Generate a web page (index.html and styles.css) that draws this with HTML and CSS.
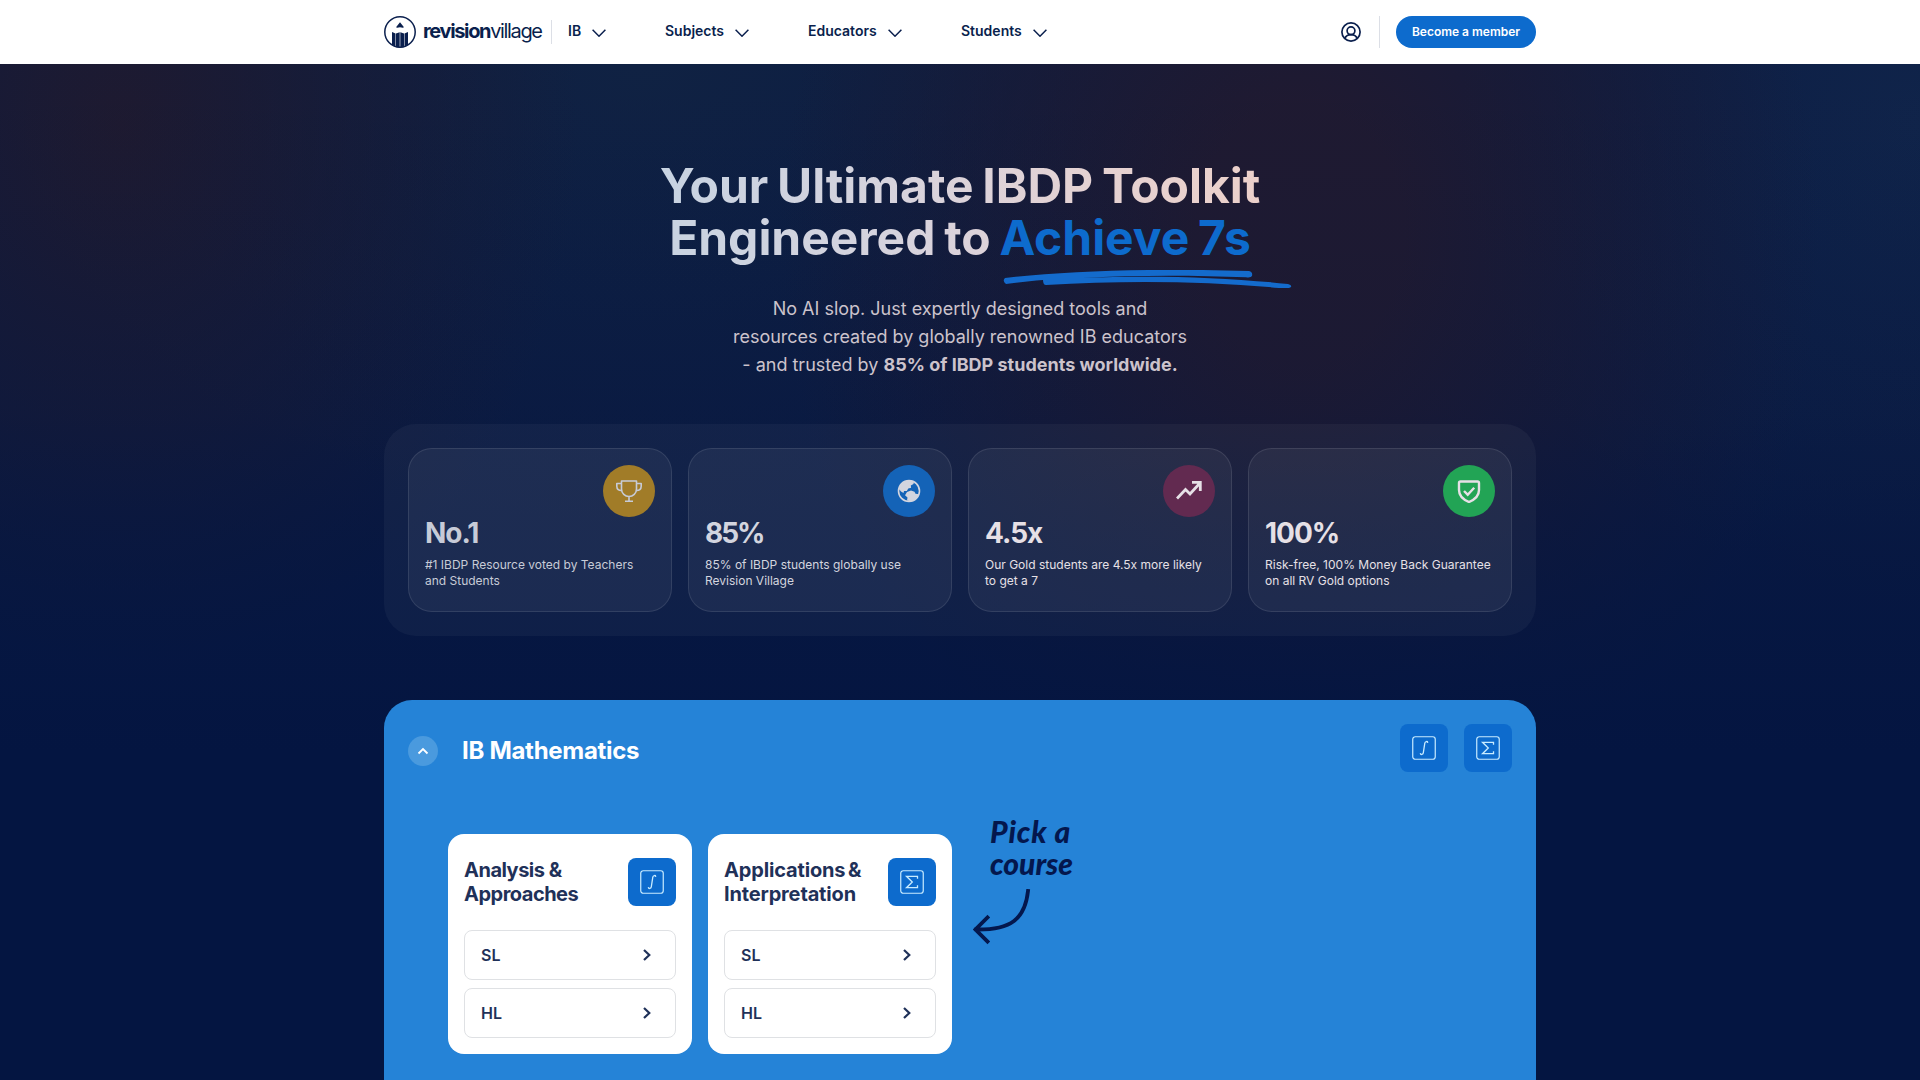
FILE: index.html
```
<!DOCTYPE html>
<html lang="en">
<head>
  <meta charset="UTF-8">
  <meta name="viewport" content="width=device-width, initial-scale=1.0">
  <title>Revision Village</title>
  <link rel="stylesheet" href="styles.css">
</head>
<body>

<!-- Shared icons -->
<svg class="sprite" width="0" height="0">
  <symbol id="chevron-down" viewBox="0 0 14 8"><path d="M0.6 0.8 7 7.2 13.4 0.8" fill="none" stroke="currentColor" stroke-width="1.5"/></symbol>
  <symbol id="chevron-right" viewBox="0 0 8 12"><path d="M1 1 6.3 6 1 11" fill="none" stroke="currentColor" stroke-width="2.2"/></symbol>
  <symbol id="integral" viewBox="0 0 24 24">
    <rect x="0.75" y="0.75" width="22.5" height="22.5" rx="2.5" fill="none" stroke="currentColor" stroke-width="1.2"/>
    <path d="M8.4 17.6c.2 1.2 2.5 1.4 2.9-.8L12.8 7.2c.4-2.2 2.7-2 2.9-.8" fill="none" stroke="currentColor" stroke-width="1.3" stroke-linecap="round"/>
  </symbol>
  <symbol id="sigma" viewBox="0 0 24 24">
    <rect x="0.75" y="0.75" width="22.5" height="22.5" rx="2.5" fill="none" stroke="currentColor" stroke-width="1.2"/>
    <path d="M17.5 8.8V6.3H6.5L12.3 12 6.5 17.7h11v-2.5" fill="none" stroke="currentColor" stroke-width="1.3"/>
  </symbol>
</svg>

<header class="header">
  <div class="container header-inner">
    <a class="logo" href="#">
      <svg width="32" height="32" viewBox="0 0 32 32">
        <circle cx="16" cy="16" r="15.2" fill="none" stroke="#0a1f4d" stroke-width="1.5"/>
        <path d="M16 6.2 20 11.2c-1.3 1-2.7 0-4 0s-2.7 1-4 0z" fill="#0a1f4d"/>
        <path d="M8 16 11.5 17.4V30.6L8 29.1zM12 17.6 15.7 16.2V31.6L12 31zM16.3 16.2 20 17.6V31L16.3 31.6zM20.5 17.4 24 16V29.1L20.5 30.6z" fill="#0a1f4d"/>
      </svg>
      <span class="wordmark"><b>revision</b>village</span>
    </a>
    <nav class="nav">
      <a class="nav-ib" href="#">IB <svg width="14" height="8"><use href="#chevron-down"/></svg></a>
      <a class="nav-subjects" href="#">Subjects <svg width="14" height="8"><use href="#chevron-down"/></svg></a>
      <a class="nav-educators" href="#">Educators <svg width="14" height="8"><use href="#chevron-down"/></svg></a>
      <a href="#">Students <svg width="14" height="8"><use href="#chevron-down"/></svg></a>
    </nav>
    <div class="account">
      <svg width="20" height="20" viewBox="0 0 20 20" fill="none" stroke="#0a1f4d" stroke-width="1.7">
        <circle cx="10" cy="10" r="9.1"/><circle cx="10" cy="8.8" r="3.9"/>
        <path d="M3.7 16.7C4.8 14 7.2 12.7 10 12.7s5.2 1.3 6.3 4"/>
      </svg>
      <a class="member-button" href="#">Become a member</a>
    </div>
  </div>
</header>

<main>
  <section class="hero">
    <h1><span class="shine">Your Ultimate IBDP Toolkit</span><br><span class="shine shine-short">Engineered to</span> <span class="achieve">Achieve 7s</span></h1>
    <svg class="underline" width="289" height="18" viewBox="0 0 289 18">
      <path d="M2 8C60 1 150-2 246 1q4 1 3 5-1 2-6 1.300C190 5 130 5 79 8c70-3 142-1 206 6q6 2 1 4-5 .5-10 0C200 11 120 10.500 43 15q-3 0-3-5C28 11 15 12.500 3 14q-4-3-1-6z" fill="#146bcc"/>
    </svg>
    <p class="intro">No AI slop. Just expertly designed tools and<br>resources created by globally renowned IB educators<br>- and trusted by <b>85% of IBDP students worldwide.</b></p>
  </section>

  <section class="stats container">
    <div class="stat stat-gold">
      <span class="stat-icon">
        <svg width="26" height="26" viewBox="0 0 26 26" fill="none" stroke="currentColor" stroke-width="1.6" stroke-linejoin="round">
          <path d="M5.5 3h15v8c0 4.500-3.500 7.500-7.500 7.500S5.500 15.500 5.500 11zM5.500 5.500H.8v2.800c0 3 2 4.400 5 4.200M20.500 5.500h4.700v2.800c0 3-2 4.400-5 4.200M13 18.500v4.700M9 23.200h8"/>
        </svg>
      </span>
      <strong>No.1</strong>
      <p>#1 IBDP Resource voted by Teachers<br>and Students</p>
    </div>
    <div class="stat stat-blue">
      <span class="stat-icon">
        <svg width="24" height="24" viewBox="0 0 24 24">
          <circle cx="12" cy="12" r="10.5" fill="none" stroke="currentColor" stroke-width="1.6"/>
          <path d="M2 10C3 5 7 1.300 12 1.300c2 0 3.600.5 5 1.200l-.5 2.500-2.700 1.600.3 2.200-2.800.7-1.500 2.500H7l-.5 2L4 12.500zM10 13l4-1.500 3.500 1.200 1 2 3.700.5C21 19 17.500 22 14 22.500L10 21.500l.5-3-2.500-2.300z" fill="currentColor"/>
        </svg>
      </span>
      <strong>85%</strong>
      <p>85% of IBDP students globally use<br>Revision Village</p>
    </div>
    <div class="stat stat-plum">
      <span class="stat-icon">
        <svg width="26" height="26" viewBox="0 0 26 26" fill="none" stroke="currentColor" stroke-width="2.8">
          <path d="M1 20.500 9.500 11.500 14 16 24 5M16 4.300h8.300V13"/>
        </svg>
      </span>
      <strong>4.5x</strong>
      <p>Our Gold students are 4.5x more likely<br>to get a 7</p>
    </div>
    <div class="stat stat-green">
      <span class="stat-icon">
        <svg width="24" height="24" viewBox="0 0 24 24" fill="none" stroke="currentColor" stroke-width="2.4">
          <path d="M3.500 2.500h17a1.500 1.500 0 0 1 1.500 1.500v7c0 6-4 9.500-10 12C6 20.500 2 17 2 11V4a1.500 1.500 0 0 1 1.500-1.500zM7 12l3.700 3.700 6.500-7"/>
        </svg>
      </span>
      <strong>100%</strong>
      <p>Risk-free, 100% Money Back Guarantee<br>on all RV Gold options</p>
    </div>
  </section>

  <section class="subject container">
    <div class="subject-header">
      <button class="toggle" aria-label="Collapse">
        <svg width="12" height="8" viewBox="0 0 12 8"><path d="M1.5 6.5 6 2 10.5 6.5" fill="none" stroke="#fff" stroke-width="1.8"/></svg>
      </button>
      <h2>IB Mathematics</h2>
      <div class="tiles">
        <span class="tile"><svg width="24" height="24"><use href="#integral"/></svg></span>
        <span class="tile"><svg width="24" height="24"><use href="#sigma"/></svg></span>
      </div>
    </div>
    <div class="courses">
      <div class="course">
        <div class="course-header">
          <h3>Analysis &amp;<br>Approaches</h3>
          <span class="tile"><svg width="24" height="24"><use href="#integral"/></svg></span>
        </div>
        <a class="level" href="#">SL <svg width="8" height="12"><use href="#chevron-right"/></svg></a>
        <a class="level" href="#">HL <svg width="8" height="12"><use href="#chevron-right"/></svg></a>
      </div>
      <div class="course">
        <div class="course-header">
          <h3 class="wide">Applications &amp;<br>Interpretation</h3>
          <span class="tile"><svg width="24" height="24"><use href="#sigma"/></svg></span>
        </div>
        <a class="level" href="#">SL <svg width="8" height="12"><use href="#chevron-right"/></svg></a>
        <a class="level" href="#">HL <svg width="8" height="12"><use href="#chevron-right"/></svg></a>
      </div>
      <div class="hint">
        <p><span class="pick">Pick a</span><br>course</p>
        <svg width="58" height="56" viewBox="0 0 58 56" fill="none" stroke="#04174d" stroke-width="3.8" stroke-linecap="square">
          <path d="M55 2C52 30 38 41 3 40.5M14.5 28.5 2.5 40.5 14.5 52.5"/>
        </svg>
      </div>
    </div>
  </section>
</main>

</body>
</html>
```
FILE: styles.css
```
* { box-sizing: border-box; }
body { margin: 0; height: 1080px; overflow: hidden; font-family: Inter, sans-serif; color: #0a1f4d; background-color: #041541; }
a { color: inherit; text-decoration: none; }
h1, h2, h3, p { margin: 0; }
svg { display: block; flex: none; }
.sprite { display: none; }
.container { width: 1152px; margin: 0 auto; }

.header { height: 64px; background-color: #fff; }
.header-inner { height: 64px; display: flex; align-items: center; }
.logo { display: flex; align-items: center; gap: 7px; height: 24px; width: 168px; border-right: 1px solid #dcdfe6; }
.wordmark { margin-top: -2px; font-size: 20px; letter-spacing: -1.35px; white-space: nowrap; }
.wordmark b { font-weight: 700; }
.nav { display: flex; margin-left: 16px; margin-top: -3px; font-size: 14px; font-weight: 600; }
.nav a { display: flex; align-items: center; gap: 11px; }
.nav svg { margin-top: 4px; }
.nav-ib { width: 97px; }
.nav-subjects { width: 143px; }
.nav-educators { width: 153px; }
.account { display: flex; align-items: center; margin-left: auto; }
.member-button { width: 140px; height: 32px; margin-left: 35px; border-radius: 16px; background-color: #0d6bcd; color: #fff; font-size: 12px; font-weight: 600; line-height: 32px; text-align: center; position: relative; }
.member-button::before { content: ""; position: absolute; left: -17px; top: 0; height: 32px; border-left: 1px solid #dcdfe6; }

main {
  height: 1016px;
  background:
    linear-gradient(to bottom, rgba(4, 21, 65, 0) 0, rgba(4, 21, 65, 0.15) 350px, #041541 690px),
    radial-gradient(ellipse 460px 560px at 120px 60px, #1e1a30, rgba(30, 26, 48, 0)),
    radial-gradient(ellipse 520px 640px at 1300px 170px, #1f1a31 20%, rgba(31, 26, 49, 0)),
    radial-gradient(ellipse 460px 480px at 1920px 60px, #10244a, rgba(16, 36, 74, 0)),
    radial-gradient(ellipse 640px 460px at 640px 0, #102243, rgba(16, 34, 67, 0)),
    #0a1a42;
}

.hero { height: 360px; padding-top: 96px; text-align: center; }
h1 { font-size: 48px; line-height: 52px; font-weight: 700; letter-spacing: -0.05px; word-spacing: -2.5px; }
.shine { color: transparent; background: linear-gradient(to right, #c7d3e2, #d6d3dd 38%, #e3d2d4 68%, #ecd0ca); background-clip: text; -webkit-background-clip: text; }
.shine-short { background-image: linear-gradient(to right, #c9d3e1, #d6d3dd 70%, #ddd2d9); }
.achieve { color: #0d6bcd; }
.underline { margin: 6px 0 0 1003px; }
.intro { margin-top: 7px; font-size: 18px; line-height: 28px; color: #ccc3cc; }
.intro b { font-weight: 700; }

.stats { height: 212px; padding: 24px; display: grid; grid-template-columns: repeat(4, 1fr); gap: 16px; border-radius: 32px; background-color: rgba(255, 255, 255, 0.04); }
.stat { padding: 16px; display: flex; flex-direction: column; border: 1px solid rgba(255, 255, 255, 0.1); border-radius: 24px; background-color: rgba(255, 255, 255, 0.05); color: #e6e0e6; }
.stat-icon { width: 52px; height: 52px; align-self: flex-end; display: flex; align-items: center; justify-content: center; border-radius: 50%; }
.stat strong { font-size: 28px; line-height: 32px; font-weight: 700; letter-spacing: -1px; }
.stat p { margin-top: 8px; font-size: 12px; line-height: 16px; white-space: nowrap; }
.stat-gold { color: #c7cbd7; }
.stat-gold .stat-icon { background-color: #a17c28; }
.stat-blue { color: #d3d5df; }
.stat-blue .stat-icon { background-color: #1463b7; }
.stat-blue strong { letter-spacing: -2px; }
.stat-plum .stat-icon { background-color: #622a50; }
.stat-green .stat-icon { background-color: #22a455; }

.subject { height: 380px; margin-top: 64px; padding: 24px; border-radius: 28px 28px 0 0; background-color: #2583d7; }
.subject-header { display: flex; align-items: flex-start; height: 110px; }
.toggle { width: 30px; height: 30px; margin: 12px 24px 0 0; padding: 0; border: 0; border-radius: 50%; display: flex; align-items: center; justify-content: center; background-color: #4a9ade; }
h2 { margin-top: 13px; font-size: 24px; line-height: 28px; letter-spacing: -0.3px; color: #fff; }
.tiles { display: flex; gap: 16px; margin-left: auto; }
.tile { width: 48px; height: 48px; flex: none; display: flex; align-items: center; justify-content: center; border-radius: 8px; background-color: #0d6bcd; color: #c9ecff; }
.courses { display: flex; gap: 16px; padding-left: 40px; }
.course { width: 244px; height: 220px; padding: 24px 16px 16px; display: flex; flex-direction: column; gap: 8px; border-radius: 16px; background-color: #fff; }
.course-header { display: flex; justify-content: space-between; margin-bottom: 16px; }
h3 { font-size: 20px; line-height: 24px; font-weight: 700; letter-spacing: -0.5px; color: #1f3159; white-space: nowrap; }
h3.wide { letter-spacing: -0.15px; word-spacing: -2px; }
.level { height: 50px; padding: 0 24px 0 16px; display: flex; align-items: center; justify-content: space-between; border: 1px solid #dfe1e4; border-radius: 8px; font-size: 16px; font-weight: 600; color: #1f3159; }
.hint { margin-top: -19px; margin-left: 5px; }
.hint p { margin-left: 17px; font-family: Lato, sans-serif; font-size: 30px; line-height: 32px; font-weight: 900; font-style: italic; color: #04174d; }
.pick { letter-spacing: 0.8px; }
.hint svg { margin-top: 10px; }
```
